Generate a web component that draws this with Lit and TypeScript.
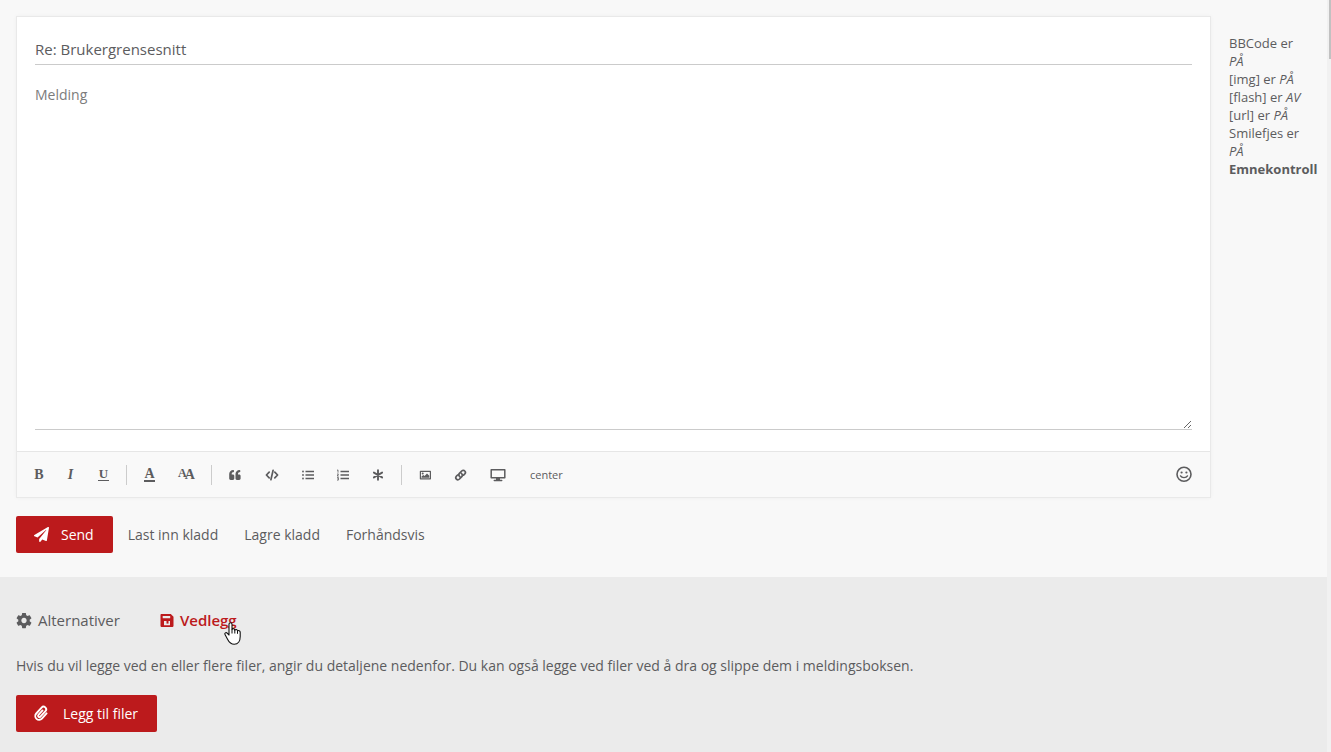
import { LitElement, html, css, svg } from "lit";
import { customElement, state } from "lit/decorators.js";

const icons = {
  quote: svg`<svg class="w12" viewBox="0 0 12 12"><path d="M5.3 7v2.6c0 .8-.6 1.4-1.4 1.4H1.6C.8 11 .2 10.4.2 9.600V5C.2 2.900 1.900 1 4.300 1c.5 0 .7.3.7.700v.8c0 .4-.3.7-.7.700-1 0-1.600.7-1.600 1.700v.7h1.200c.8 0 1.400.6 1.400 1.400zM11.600 7v2.600c0 .8-.6 1.400-1.400 1.400H7.900c-.8 0-1.400-.6-1.400-1.400V5c0-2.100 1.700-4 4.100-4 .5 0 .7.3.7.700v.8c0 .4-.3.7-.7.700-1 0-1.600.7-1.600 1.700v.7h1.200c.8 0 1.400.6 1.400 1.400z"/></svg>`,
  code: svg`<svg class="w14" viewBox="0 0 14 14"><path class="line" stroke-width="1.700" d="M4.200 4.200 1.400 7l2.800 2.800M9.800 4.200 12.600 7l-2.800 2.800M8.100 2.300 5.900 11.700"/></svg>`,
  list: svg`<svg class="w11" viewBox="0 0 11 12"><path class="line flat" stroke-width="1.300" d="M2.500 2.500h8.500M2.500 6h8.500M2.500 9.500h8.500"/><circle cx="0" cy="2.500" r=".9"/><circle cx="0" cy="6" r=".9"/><circle cx="0" cy="9.500" r=".9"/></svg>`,
  ordered: svg`<svg class="w11" viewBox="0 0 11 12"><path class="line flat" stroke-width="1.300" d="M2.500 2.500h8.500M2.500 6h8.500M2.500 9.500h8.500"/><path class="line flat" stroke-width=".8" d="M-1 1.400 0 .900v2.800M-1 5h1.500L-.8 7h1.600M-1 8.400H.4v2.700H-1M-.6 9.700h1"/></svg>`,
  star: svg`<svg class="w11" viewBox="0 0 11 12"><path class="line" stroke-width="1.900" d="M5 1.200v9.600M.9 3.600l8.200 4.800M9.100 3.600.9 8.400"/></svg>`,
  image: svg`<svg class="w12" viewBox="0 0 12 12"><path class="line" stroke-width="1.200" d="M1.400 2.400h10v7.400h-10z"/><circle cx="3.700" cy="4.600" r="1"/><path d="M2.500 8.700V7.400L4.300 6l1.200 1 2.500-2.600 2.300 2.300v2z"/></svg>`,
  link: svg`<svg class="w11" viewBox="0 0 11 12"><path class="line" stroke-width="1.700" d="M4.700 7.600C3.500 6.400 3.600 5.300 4.400 4.400L6.700 2c1-1 2.300-.9 3.100 0 .8.800.8 2 0 2.900L8.600 6.100M6.500 4.500c1.200 1.200 1.100 2.300.3 3.200L4.500 10c-1 1-2.300.9-3.100.1-.8-.8-.8-2 0-2.900L2.600 6"/></svg>`,
  desktop: svg`<svg class="w16" viewBox="0 0 16 14"><path class="line" stroke-width="1.500" d="M1.200 1.800h13.600v8H1.200zM4.300 12.500h7.400"/><path d="M6 10h4v2.500H6z"/></svg>`,
  smile: svg`<svg class="w16" viewBox="0 0 16 16"><circle class="line" stroke-width="1.600" cx="8" cy="7.300" r="7"/><circle cx="5.600" cy="5.500" r="1.100"/><circle cx="10.400" cy="5.500" r="1.100"/><path class="line" stroke-width="1.400" d="M4.500 8.900c1.400 2.300 5.600 2.300 7 0"/></svg>`,
  plane: svg`<svg class="w15" viewBox="0 0 512 512"><path d="M476 3.200L12.500 270.600c-18.100 10.400-15.800 35.600 2.200 43.200L121 358.400l287.300-253.200c5.500-4.900 13.300 2.600 8.600 8.300L176 407v80.500c0 23.600 28.500 32.900 42.500 15.800L282 426l124.600 52.200c14.200 6 30.400-2.900 33-18.200l72-432C515 7.800 493.300-6.800 476 3.200z"/></svg>`,
  clip: svg`<svg class="w15" viewBox="0 0 15 15"><path class="line" stroke-width="1.900" transform="rotate(42 7.500 7.500)" d="M11.200 4v7a3.800 3.800 0 0 1-7.600 0V3a2.600 2.600 0 0 1 5.200 0v7.600a1.300 1.300 0 0 1-2.600 0V4.500"/></svg>`,
  gear: svg`<svg class="w16" viewBox="1.500 .8 21 21"><path d="M19.430 12.980c.04-.32.07-.64.07-.98s-.03-.66-.07-.98l2.110-1.650c.19-.15.24-.42.12-.64l-2-3.460c-.12-.22-.39-.3-.61-.22l-2.490 1c-.52-.4-1.080-.73-1.690-.98l-.38-2.650C14.460 2.180 14.250 2 14 2h-4c-.25 0-.46.18-.49.42l-.38 2.650c-.61.25-1.170.59-1.690.98l-2.490-1c-.23-.09-.49 0-.61.22l-2 3.460c-.13.22-.07.49.12.64l2.110 1.650c-.04.32-.07.65-.07.98s.03.66.07.98l-2.110 1.650c-.19.15-.24.42-.12.64l2 3.460c.12.22.39.3.61.22l2.490-1c.52.4 1.080.73 1.690.98l.38 2.650c.03.24.24.42.49.42h4c.25 0 .46-.18.49-.42l.38-2.650c.61-.25 1.170-.59 1.690-.98l2.490 1c.23.09.49 0 .61-.22l2-3.460c.12-.22.07-.49-.12-.64l-2.110-1.650zM12 15.500c-1.930 0-3.500-1.570-3.500-3.500s1.570-3.500 3.500-3.500 3.500 1.570 3.500 3.500-1.570 3.500-3.500 3.500z"/></svg>`,
  save: svg`<svg class="w14" viewBox="0 0 14 14"><path fill-rule="evenodd" d="M1.500 1h9.300l2.700 2.700v9c0 .8-.6 1.300-1.500 1.300H2c-.9 0-1.500-.5-1.500-1.300V2c0-.6.4-1 1-1zM2.700 3v2.300h7.500V3zM4 8v4.300h6V8z"/><path d="M6.500 8h2v2.600h-2z"/></svg>`,
  hand: svg`<svg class="cursor" viewBox="0 0 17 23"><path fill="#fff" stroke="#111" stroke-width="1.100" stroke-linejoin="round" d="M5 13V2.200C5 .3 8 .3 8 2.200v5.300c.4-1.300 2.700-1 2.800.6.700-1 2.600-.7 2.700.8 1-.8 2.700-.3 2.700 1.300v4.300c0 4-1.900 7.800-6 7.800-3.600 0-5.200-2.200-6.500-4.800L1 12.600c-.8-1.500 1-2.700 2.200-1.500z"/><path fill="none" stroke="#111" d="M8 7.500v4M10.800 8v3.500M13.500 9v2.800"/></svg>`,
};

@customElement("app-root")
export class AppRoot extends LitElement {
  static styles = css`
    :host {
      display: block;
      height: 100vh;
      overflow: hidden;
      font-family: "Open Sans", sans-serif;
      font-size: 14px;
      line-height: 20px;
      color: #5c5c5e;
    }
    * { box-sizing: border-box; }
    button, input, textarea { font: inherit; color: inherit; margin: 0; }
    button { cursor: pointer; border: 0; padding: 0; background: none; }
    svg { display: block; fill: currentColor; overflow: visible; flex: none; height: 14px; }
    .line { fill: none; stroke: currentColor; stroke-linecap: round; stroke-linejoin: round; }
    .flat { stroke-linecap: butt; }
    .w11 { width: 11px; height: 12px; }
    .w12 { width: 12px; height: 12px; }
    .w14 { width: 14px; height: 14px; }
    .w15 { width: 15px; height: 15px; }
    .w16 { width: 16px; height: 16px; }
    .page { display: flex; min-height: 100%; }
    .content { flex: 1; min-width: 0; display: flex; flex-direction: column; }
    .track { width: 4px; background: #f1f1f1; padding-left: 2px; }
    .thumb { height: 59px; background: #c1c1c1; }
    .compose { background: #f8f8f8; padding: 16px 16px 24px; }
    .row { display: grid; grid-template-columns: minmax(0, 1fr) 100px; }
    .card { background: #fff; border: 1px solid #e9e9e9; box-shadow: 0 0 4px rgba(0, 0, 0, 0.04); }
    .fields { padding: 18px 18px 21px; display: flex; flex-direction: column; gap: 12px; }
    .subject, .message {
      display: block; width: 100%; border: 0; border-bottom: 1px solid #cbcbcb;
      background: none; outline: none; border-radius: 0; padding: 0;
    }
    .subject { height: 30px; padding-bottom: 2px; font-size: 15px; }
    .message { height: 353px; padding-top: 8px; resize: vertical; }
    .message::placeholder { color: #7c7c7c; opacity: 1; }
    .toolbar {
      display: flex; align-items: center; height: 46px; padding: 0 6px;
      background: #f9f9f9; border-top: 1px solid #e6e6e6;
    }
    .tool { display: flex; align-items: center; justify-content: center; height: 32px; padding: 0 12px; }
    .sep { width: 1px; height: 20px; margin: 0 5px; background: #ccc; }
    .letter { font-family: "Liberation Serif", serif; font-weight: 700; font-size: 14px; line-height: 14px; display: flex; justify-content: center; }
    .bold { width: 8px; }
    .italic { width: 7px; font-style: italic; }
    .under { width: 11px; border-bottom: 1px solid; line-height: 12px; font-size: 13px; }
    .colour { width: 11px; border-bottom: 2px solid; line-height: 12px; }
    .size { width: 15px; align-items: flex-start; }
    .small { font-size: 12px; line-height: 11px; margin-right: -2px; }
    .text { font-size: 11px; }
    .smiley { margin-left: auto; padding-right: 12px; }
    .status { padding: 18px 0 0 18px; font-size: 13px; line-height: 18px; }
    .status p { margin: 0; }
    .actions { display: flex; align-items: center; margin-top: 18px; }
    .primary {
      display: flex; align-items: center; gap: 12px; height: 37px; padding: 0 19px 0 18px;
      border-radius: 2px; background: #bc1a1c; color: #fff;
    }
    .attach { gap: 14px; }
    .links { display: flex; gap: 26px; padding-left: 15px; }
    .extras { flex: 1; background: #ebebeb; padding: 31px 16px 20px; }
    .tabs { display: flex; gap: 40px; }
    .tab { display: flex; align-items: center; gap: 6px; font-size: 15px; line-height: 24px; position: relative; }
    .active { color: #bc1a1c; font-weight: 600; }
    .hint { margin: 24px 0 19px; }
    .cursor { position: absolute; left: 64px; top: 14px; width: 17px; height: 23px; }
  `;

  @state() private tab = "files";

  private tool(label: string, content: unknown) {
    return html`<button class="tool" type="button" aria-label=${label}>${content}</button>`;
  }

  render() {
    return html`
      <div class="page">
        <main class="content">
          <section class="compose">
            <div class="row">
              <div class="card">
                <div class="fields">
                  <input class="subject" aria-label="Emne" value="Re: Brukergrensesnitt" />
                  <textarea class="message" aria-label="Melding" placeholder="Melding"></textarea>
                </div>
                <div class="toolbar">
                  ${this.tool("Fet", html`<span class="letter bold">B</span>`)}
                  ${this.tool("Kursiv", html`<span class="letter italic">I</span>`)}
                  ${this.tool("Understreket", html`<span class="letter under">U</span>`)}
                  <span class="sep"></span>
                  ${this.tool("Farge", html`<span class="letter colour">A</span>`)}
                  ${this.tool("Størrelse", html`<span class="letter size"><span class="small">A</span>A</span>`)}
                  <span class="sep"></span>
                  ${this.tool("Sitat", icons.quote)}
                  ${this.tool("Kode", icons.code)}
                  ${this.tool("Liste", icons.list)}
                  ${this.tool("Nummerert liste", icons.ordered)}
                  ${this.tool("Listepunkt", icons.star)}
                  <span class="sep"></span>
                  ${this.tool("Bilde", icons.image)}
                  ${this.tool("Lenke", icons.link)}
                  ${this.tool("Media", icons.desktop)}
                  <button class="tool text" type="button">center</button>
                  <button class="tool smiley" type="button" aria-label="Smilefjes">${icons.smile}</button>
                </div>
              </div>
              <aside class="status">
                <p>BBCode er <em>PÅ</em></p>
                <p>[img] er <em>PÅ</em></p>
                <p>[flash] er <em>AV</em></p>
                <p>[url] er <em>PÅ</em></p>
                <p>Smilefjes er <em>PÅ</em></p>
                <p><strong>Emnekontroll</strong></p>
              </aside>
            </div>
            <div class="actions">
              <button class="primary" type="button">${icons.plane}Send</button>
              <div class="links">
                <button type="button">Last inn kladd</button>
                <button type="button">Lagre kladd</button>
                <button type="button">Forhåndsvis</button>
              </div>
            </div>
          </section>
          <section class="extras">
            <div class="tabs">
              <button class="tab ${this.tab === "options" ? "active" : ""}" type="button" @click=${() => (this.tab = "options")}>${icons.gear}Alternativer</button>
              <button class="tab ${this.tab === "files" ? "active" : ""}" type="button" @click=${() => (this.tab = "files")}>${icons.save}Vedlegg${icons.hand}</button>
            </div>
            <p class="hint">Hvis du vil legge ved en eller flere filer, angir du detaljene nedenfor. Du kan også legge ved filer ved å dra og slippe dem i meldingsboksen.</p>
            <button class="primary attach" type="button">${icons.clip}Legg til filer</button>
          </section>
        </main>
        <div class="track"><div class="thumb"></div></div>
      </div>
    `;
  }
}
